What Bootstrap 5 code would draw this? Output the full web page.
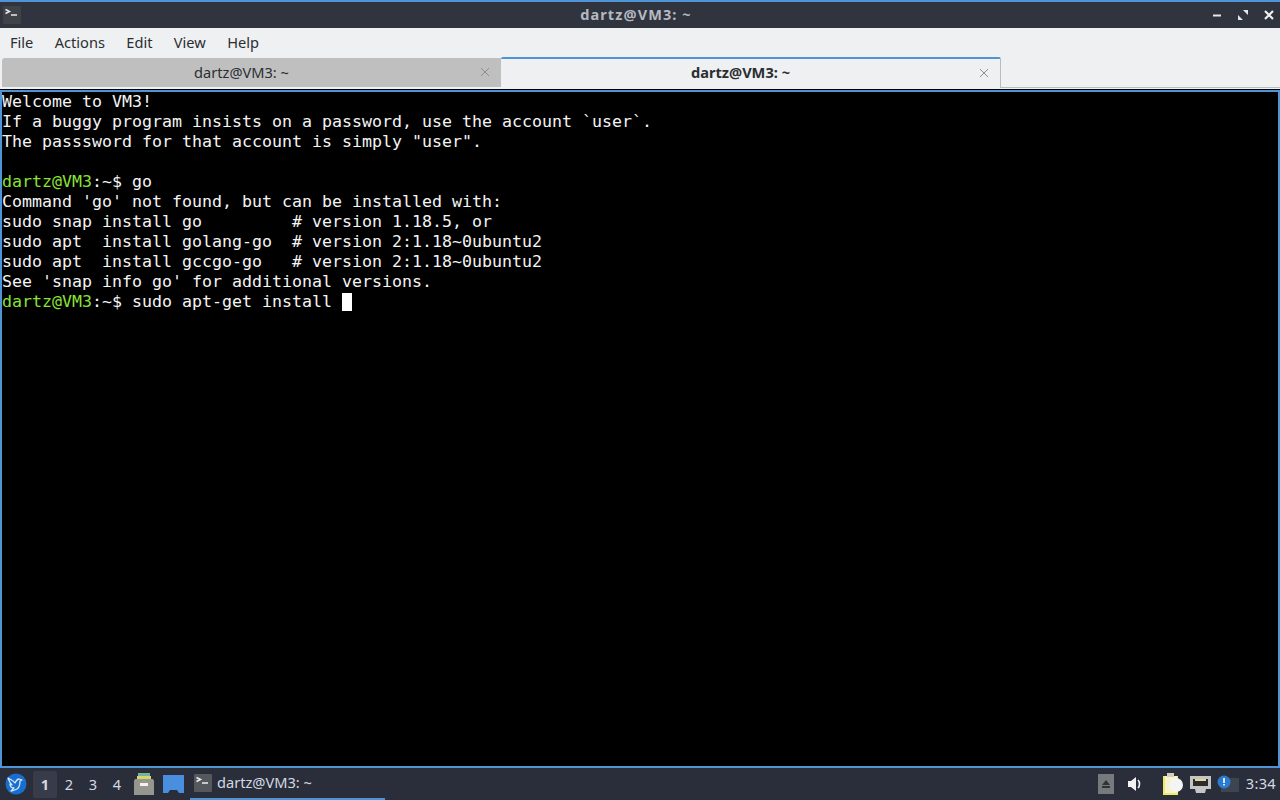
<!DOCTYPE html>
<html lang="en">
<head>
<meta charset="utf-8">
<title>dartz@VM3: ~</title>
<link rel="stylesheet" href="https://cdn.jsdelivr.net/npm/bootstrap@5.3.0/dist/css/bootstrap.min.css">
<style>
html,body{height:800px;overflow:hidden;background:#000}
body{font-family:"Noto Sans","Open Sans",sans-serif}
.win-shell{height:800px}
.title-strip{height:28px;background:#2f343f;border-top:2px solid #4f94d4;color:#b5b9c0;font-size:14.5px;font-weight:700;padding:0 5px 0 3px}
.title-text{flex:1;text-align:center;letter-spacing:1.1px;padding-left:40px}
.term-ico{width:18px;height:18px;display:block}
.ctl-ico{width:12px;height:12px;display:block}
.menu-strip{height:30px;background:#eff0f1;color:#2a2e32;font-size:14.6px;padding-left:10px;gap:21.4px;padding-bottom:1px}
.tab-strip{height:31px;background:#eff0f1;color:#2a2e32;font-size:14.6px;padding-left:2px;position:relative}
.tab-strip::after{content:"";position:absolute;left:1001px;right:0;bottom:1px;height:1px;background:#b9bcbf}
.term-tab{width:500px;height:29px;position:relative;display:flex;align-items:center;justify-content:center;padding-right:20px}
.tab-off{width:499px;background:#bfbfbf;border-radius:3px 0 0 0}
.tab-on{background:#eff0f1;border-top:2px solid #4f94d4;border-right:1px solid #b9bcbf;font-weight:700;height:31px;margin-top:-1px;padding-bottom:2px;border-radius:2px 2px 0 0}
.tab-x{position:absolute;right:11px;top:9px;width:10px;height:10px}
.term-body{flex:1;min-height:0;background:#000;border:solid #4f94d4;border-width:2px;margin-top:1px;color:#f4f4f4;font-family:"DejaVu Sans Mono","Liberation Mono",monospace;font-size:16.61px;line-height:20px;overflow:hidden}
.term-line{height:20px;white-space:pre}
.gp{color:#8ae234}
.cursor-block{display:inline-block;width:10px;height:18px;background:#fff;margin-top:1px}
.panel-strip{height:32px;background:#2a2e3b;color:#d3dae3;font-size:14.6px;padding:0 0 0 5px}
.ws-num{width:24px;text-align:center;height:27px;line-height:27px;font-size:14.6px;color:#d3dae3}
.ws-now{background:#383c4a;font-weight:700;border-radius:2px}
.task-btn{width:195px;height:32px;border-bottom:2px solid #4f94d4;padding-left:4px;gap:5px;margin-left:6px;color:#d3dae3;font-size:14.6px}
.clock-text{font-size:14.6px;padding-right:4px;margin-left:7px;letter-spacing:.3px}
</style>
</head>
<body>
<div class="win-shell d-flex flex-column">
  <div class="title-strip d-flex align-items-center">
    <svg class="term-ico" viewBox="0 0 18 18"><rect width="18" height="18" rx="1.5" fill="#3f4247"/><path d="M2.5 3.5l4 2-4 2" fill="none" stroke="#e8e8e8" stroke-width="1.5"/><path d="M8 9h6" stroke="#e8e8e8" stroke-width="1.5"/></svg>
    <div class="title-text">dartz@VM3: ~</div>
    <div class="d-flex align-items-center" style="gap:14px">
      <svg class="ctl-ico" viewBox="0 0 12 12"><path d="M2 6.5h8" stroke="#e6e6e6" stroke-width="2"/></svg>
      <svg class="ctl-ico" viewBox="0 0 12 12"><path d="M6 1h5v5zM6 11H1V6z" fill="#e6e6e6"/></svg>
      <svg class="ctl-ico" viewBox="0 0 12 12"><path d="M2 2l8 8M10 2l-8 8" stroke="#f0f0f0" stroke-width="2.2"/></svg>
    </div>
  </div>
  <div class="menu-strip d-flex align-items-center">
    <span>File</span><span>Actions</span><span>Edit</span><span>View</span><span>Help</span>
  </div>
  <div class="tab-strip d-flex">
    <div class="term-tab tab-off"><span>dartz@VM3: ~</span>
      <svg class="tab-x" viewBox="0 0 10 10"><path d="M1 1l8 8M9 1l-8 8" stroke="#8c8c8c" stroke-width="1"/></svg>
    </div>
    <div class="term-tab tab-on"><span>dartz@VM3: ~</span>
      <svg class="tab-x" viewBox="0 0 10 10"><path d="M1 1l8 8M9 1l-8 8" stroke="#8c8c8c" stroke-width="1"/></svg>
    </div>
  </div>
  <div class="term-body">
    <div class="term-line">Welcome to VM3!</div>
    <div class="term-line">If a buggy program insists on a password, use the account `user`.</div>
    <div class="term-line">The passsword for that account is simply "user".</div>
    <div class="term-line"></div>
    <div class="term-line d-flex"><span class="gp">dartz@VM3</span><span>:~$ go</span></div>
    <div class="term-line">Command 'go' not found, but can be installed with:</div>
    <div class="term-line">sudo snap install go         # version 1.18.5, or</div>
    <div class="term-line">sudo apt  install golang-go  # version 2:1.18~0ubuntu2</div>
    <div class="term-line">sudo apt  install gccgo-go   # version 2:1.18~0ubuntu2</div>
    <div class="term-line">See 'snap info go' for additional versions.</div>
    <div class="term-line d-flex"><span class="gp">dartz@VM3</span><span>:~$ sudo apt-get install </span><span class="cursor-block"></span></div>
  </div>
  <div class="panel-strip d-flex align-items-center">
    <svg width="22" height="22" viewBox="0 0 22 22" style="margin-right:6px"><circle cx="11" cy="11" r="10.5" fill="#1a6fce"/><path d="M3 5c3 2 5 2 7 5 1-2 2-4 4-4l3 1-2 1c0 3 0 6-3 8-2 1-4 2-6 2l3-3c-3 0-4-2-4-4l2 1C5 10 4 8 3 5z" fill="none" stroke="#d4e9fb" stroke-width="1.3" stroke-linejoin="round"/></svg>
    <div class="ws-num ws-now">1</div><div class="ws-num">2</div><div class="ws-num">3</div><div class="ws-num">4</div>
    <svg width="20" height="22" viewBox="0 0 20 22" style="margin-left:5px"><path d="M4 0h12v3H4z" fill="#6fb7a0"/><path d="M3 3h14v3H3z" fill="#d8d66a"/><path d="M1 6h18l1 2v14H0V8z" fill="#96968f"/><path d="M6 10h8v3H6z" fill="#f2f2f2"/></svg>
    <svg width="21" height="18" viewBox="0 0 21 18" style="margin-left:9px"><path d="M0 0h21v18h-5l-2-3H7l-2 3H0z" fill="#4a8ee0"/></svg>
    <div class="task-btn d-flex align-items-center">
      <svg width="18" height="18" viewBox="0 0 18 18"><rect width="18" height="18" rx="1" fill="#55585c"/><path d="M2.5 3.5l4 2-4 2" fill="none" stroke="#eee" stroke-width="1.5"/><path d="M8 9h6" stroke="#eee" stroke-width="1.5"/></svg>
      <span>dartz@VM3: ~</span>
    </div>
    <div class="ms-auto d-flex align-items-center">
      <svg width="16" height="20" viewBox="0 0 16 20"><rect width="16" height="20" fill="#777a7d"/><path d="M8 6l4 5H4zM4 12h8v2H4z" fill="#303238"/></svg>
      <svg width="18" height="18" viewBox="0 0 18 18" style="margin-left:12px"><path d="M2 6h3l5-4v14l-5-4H2z" fill="#f2f2f2"/><path d="M12 5c2 2 2 6 0 8" fill="none" stroke="#f2f2f2" stroke-width="1.6"/></svg>
      <svg width="21" height="22" viewBox="0 0 21 22" style="margin-left:19px"><path d="M0 3h15v19H0z" fill="#efe96e"/><path d="M2 3h12v17H2z" fill="#f6f4c8"/><path d="M4 0h7v4H4z" fill="#cfcfc4"/><circle cx="13" cy="12" r="7" fill="#f4f4f4"/></svg>
      <svg width="21" height="17" viewBox="0 0 21 17" style="margin-left:6px"><path d="M0 0h21v13h-5l-1 4H6l-1-4H0z" fill="#c4c6c6"/><path d="M3 3h15v7H3z" fill="#2f2b26"/><path d="M5 3h11v2H5z" fill="#e3d79a"/></svg>
      <svg width="22" height="18" viewBox="0 0 22 18" style="margin-left:6px"><rect x="4" y="3" width="18" height="14" fill="#3e4450"/><circle cx="7" cy="7" r="6.5" fill="#2b7cd0"/><path d="M6.2 3h1.6v5H6.2zM6.2 9h1.6v1.6H6.2z" fill="#fff"/></svg>
      <span class="clock-text">3:34</span>
    </div>
  </div>
</div>
<script src="https://cdn.jsdelivr.net/npm/bootstrap@5.3.0/dist/js/bootstrap.bundle.min.js"></script>
</body>
</html>
